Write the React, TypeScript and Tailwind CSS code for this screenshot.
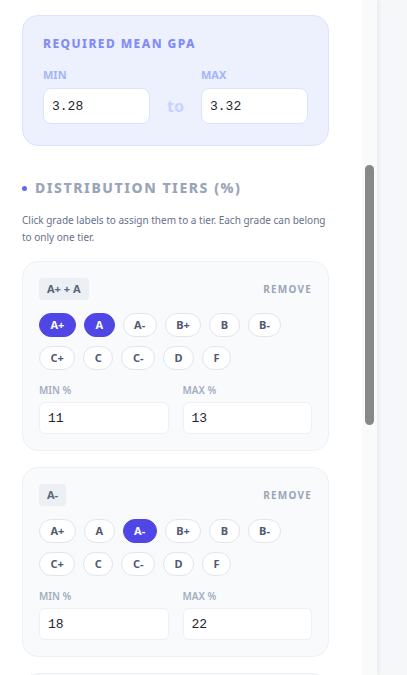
import { useState } from "react";

const GRADES = ["A+", "A", "A-", "B+", "B", "B-", "C+", "C", "C-", "D", "F"];

type Tier = { label: string; grades: string[]; min: string; max: string };

const TIERS: Tier[] = [
  { label: "A+ + A", grades: ["A+", "A"], min: "11", max: "13" },
  { label: "A-", grades: ["A-"], min: "18", max: "22" },
  { label: "B+", grades: ["B+"], min: "20", max: "24" },
];

function TierCard({ tier }: { tier: Tier }) {
  return (
    <div className="rounded-2xl border border-[#edf0f5] bg-[#f8fafc] p-4">
      <div className="flex items-center justify-between">
        <span className="flex h-[22px] items-center rounded bg-[#eceff4] px-2 text-[11px] font-bold text-[#5b6579]">
          {tier.label}
        </span>
        <button className="text-[10px] font-bold tracking-[0.12em] text-[#9aa5b8]">REMOVE</button>
      </div>

      <div className="mt-[13px] flex flex-wrap gap-x-2 gap-y-[9px]">
        {GRADES.map((g) => {
          const on = tier.grades.includes(g);
          return (
            <span
              key={g}
              className={
                on
                  ? "flex h-6 items-center rounded-full border border-[#4f46e5] bg-[#4f46e5] px-[10.5px] text-[11px] font-bold text-white"
                  : "flex h-6 items-center rounded-full border border-[#e0e5ee] bg-white px-[10.5px] text-[11px] font-bold text-[#4f5a70]"
              }
            >
              {g}
            </span>
          );
        })}
      </div>

      <div className="mt-[14px] grid grid-cols-2 gap-[14px]">
        <div>
          <div className="mb-[5px] text-[10px] font-semibold leading-[13px] text-[#a3adbd]">MIN %</div>
          <input
            defaultValue={tier.min}
            className="h-8 w-full rounded-md border border-[#edf0f5] bg-white px-2 font-['Liberation_Mono',monospace] text-[13px] text-[#1f2430] outline-none"
          />
        </div>
        <div>
          <div className="mb-[5px] text-[10px] font-semibold leading-[13px] text-[#a3adbd]">MAX %</div>
          <input
            defaultValue={tier.max}
            className="h-8 w-full rounded-md border border-[#edf0f5] bg-white px-2 font-['Liberation_Mono',monospace] text-[13px] text-[#1f2430] outline-none"
          />
        </div>
      </div>
    </div>
  );
}

export default function App() {
  const [gpa] = useState({ min: "3.28", max: "3.32" });

  return (
    <div className="flex h-[675px] w-full overflow-hidden bg-[#f6f7f9] font-['Noto_Sans',sans-serif]">
      <div className="relative z-10 flex h-full w-[377px] shrink-0 bg-white shadow-[2px_0_5px_rgba(15,23,42,0.06)]">
        <div className="h-full w-[362px] overflow-hidden pl-[22px] pr-[33px] pt-[15px]">
          {/* gpa range */}
          <div className="rounded-2xl border border-[#dbe2fb] bg-[#edf1fe] p-5 pb-[21px]">
            <h3 className="text-xs font-extrabold leading-4 tracking-[0.12em] text-[#818cf8]">REQUIRED MEAN GPA</h3>
            <div className="mt-4 flex items-end gap-[17px]">
              <div className="flex-1">
                <div className="mb-[6px] text-[11px] font-bold leading-[14px] text-[#a5b4fc]">MIN</div>
                <input
                  defaultValue={gpa.min}
                  className="h-9 w-full rounded-lg border border-[#dde3fb] bg-white px-2 font-['Liberation_Mono',monospace] text-[13px] text-[#1f2430] outline-none"
                />
              </div>
              <span className="flex h-9 items-center text-base font-bold text-[#c7d2fe]">to</span>
              <div className="flex-1">
                <div className="mb-[6px] text-[11px] font-bold leading-[14px] text-[#a5b4fc]">MAX</div>
                <input
                  defaultValue={gpa.max}
                  className="h-9 w-full rounded-lg border border-[#dde3fb] bg-white px-2 font-['Liberation_Mono',monospace] text-[13px] text-[#1f2430] outline-none"
                />
              </div>
            </div>
          </div>

          {/* tiers */}
          <div className="mt-8 flex items-center gap-2">
            <span className="h-[5px] w-[5px] rounded-full bg-[#6366f1]" />
            <h3 className="text-sm font-extrabold leading-5 tracking-[0.11em] text-[#9aa5b8]">DISTRIBUTION TIERS (%)</h3>
          </div>
          <p className="mt-[14px] text-[10px] leading-[17px] text-[#66728a]">
            Click grade labels to assign them to a tier. Each grade can belong to only one tier.
          </p>

          <div className="mt-[15px] flex flex-col gap-4">
            {TIERS.map((t) => (
              <TierCard key={t.label} tier={t} />
            ))}
          </div>
        </div>

        {/* scrollbar */}
        <div className="h-full w-[15px] bg-[#fafafa] px-[3px] pt-[165px]">
          <div className="h-[260px] w-[9px] rounded-full bg-[#888888]" />
        </div>
      </div>
      <div className="flex-1" />
    </div>
  );
}
